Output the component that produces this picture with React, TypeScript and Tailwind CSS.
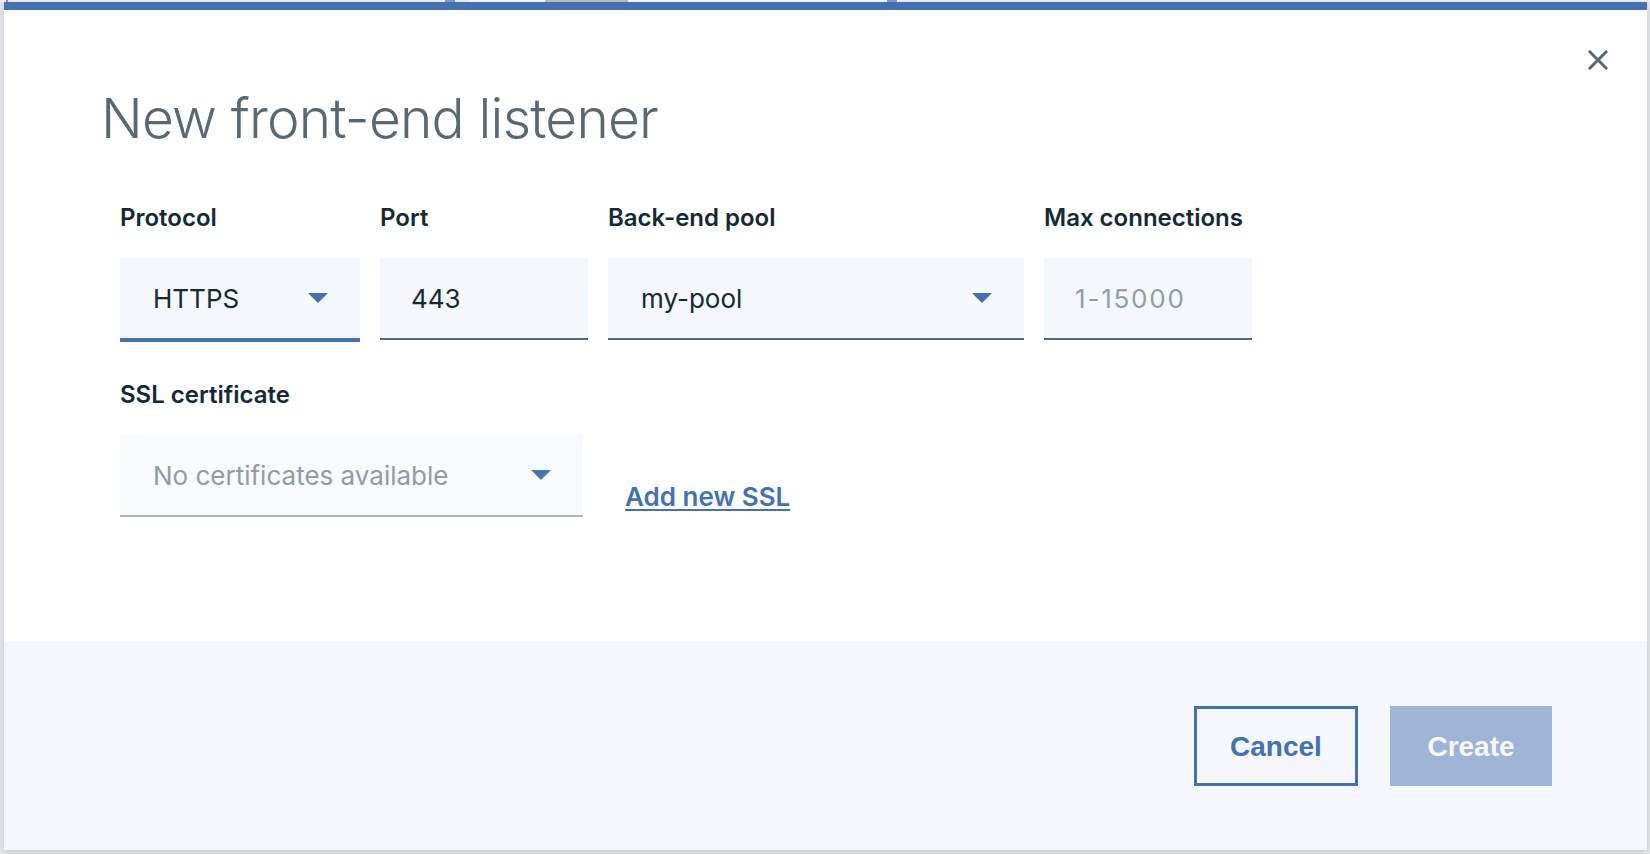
import React from 'react';

const labelCls = "block text-[24px] leading-[30px] font-semibold text-[#152935] font-['Inter',sans-serif]";
const fieldText = "text-[26px] font-['Inter',sans-serif]";

/** Small blue caret used in the select fields */
const Caret: React.FC<{ className?: string }> = ({ className = '' }) => (
  <svg className={className} width="20" height="10" viewBox="0 0 20 10">
    <path d="M0 0h20L10 10z" fill="currentColor" />
  </svg>
);

interface SelectProps {
  value: string;
  width: string;
  active?: boolean;
  disabled?: boolean;
}

const SelectField: React.FC<SelectProps> = ({ value, width, active, disabled }) => (
  <div
    className={[
      'h-[82px] flex items-center justify-between pl-[33px] pr-[32px] border-b-2',
      width,
      disabled ? 'bg-[#f8fafc] border-[#adb3b8]' : 'bg-[#f4f7fb] border-[#5a6872]',
      active ? 'border-[#4571b0] shadow-[0_2px_0_0_#4571b0]' : '',
    ].join(' ')}
  >
    <span className={[fieldText, disabled ? 'text-[#939ca4]' : 'text-[#152935]'].join(' ')}>{value}</span>
    <Caret className={disabled ? 'text-[#4a73b0]' : 'text-[#4571b0]'} />
  </div>
);

const InputField: React.FC<{ value?: string; placeholder?: string; width: string }> = ({ value, placeholder, width }) => (
  <div className={['h-[82px] flex items-center pl-[31px] bg-[#f4f7fb] border-b-2 border-[#5a6872]', width].join(' ')}>
    {value ? (
      <span className={[fieldText, 'text-[#152935]'].join(' ')}>{value}</span>
    ) : (
      <span className={[fieldText, 'text-[#949ea6] tracking-[1.8px]'].join(' ')}>{placeholder}</span>
    )}
  </div>
);

const Field: React.FC<{ label: string; children: React.ReactNode }> = ({ label, children }) => (
  <div className="flex flex-col gap-[25px]">
    <span className={labelCls}>{label}</span>
    {children}
  </div>
);

export default function App() {
  return (
    <div className="relative w-[1650px] h-[854px] overflow-hidden bg-[#e3e5e8]">
      {/* page remnants peeking above the modal */}
      <div className="relative h-[2px] overflow-hidden bg-[#eef0f2]">
        <div className="absolute left-[6px] top-0 w-[2px] h-[2px] bg-[#8a949c]" />
        <div className="absolute left-[470px] top-0 w-[420px] h-[2px] bg-[#f7f8fa]" />
        <div className="absolute left-[445px] top-0 w-[10px] h-[2px] bg-[#7f9ccc]" />
        <div className="absolute left-[545px] top-0 w-[83px] h-[2px] bg-[#b9bec3]" />
        <div className="absolute left-[887px] top-0 w-[10px] h-[2px] bg-[#7f9ccc]" />
      </div>

      {/* Modal */}
      <div className="absolute left-[4px] top-[2px] w-[1643px] h-[848px] flex flex-col bg-white border-t-[8px] border-[#4571b0] shadow-[0_2px_6px_rgba(0,0,0,0.12)]">
        <div className="relative flex-1 flex flex-col">
          <button className="absolute top-[40px] right-[39px] w-[20px] h-[20px] text-[#5a6872]">
            <svg width="20" height="20" viewBox="0 0 20 20">
              <path d="M2 2L18 18M18 2L2 18" stroke="currentColor" strokeWidth="3" strokeLinecap="square" />
            </svg>
          </button>

          <h1 className="mt-[80px] ml-[97px] text-[55px] leading-[57px] font-light tracking-[-0.8px] text-[#5a6872] font-['Inter',sans-serif]">
            New front-end listener
          </h1>

          <div className="mt-[56px] ml-[116px] flex flex-col">
            {/* Row 1 */}
            <div className="flex gap-[20px]">
              <Field label="Protocol">
                <SelectField value="HTTPS" width="w-[240px]" active />
              </Field>
              <Field label="Port">
                <InputField value="443" width="w-[208px]" />
              </Field>
              <Field label="Back-end pool">
                <SelectField value="my-pool" width="w-[416px]" />
              </Field>
              <Field label="Max connections">
                <InputField placeholder="1-15000" width="w-[208px]" />
              </Field>
            </div>

            {/* Row 2 */}
            <div className="mt-[40px] flex items-end gap-[42px]">
              <Field label="SSL certificate">
                <SelectField value="No certificates available" width="w-[463px]" disabled />
              </Field>
              <a
                href="#"
                className="mb-[3px] text-[26px] leading-[34px] font-semibold text-[#4571b0] underline decoration-2 underline-offset-[3px] font-['Inter',sans-serif]"
              >
                Add new SSL
              </a>
            </div>
          </div>
        </div>

        {/* Footer */}
        <div className="h-[209px] bg-[#f4f7fb] flex items-center justify-end gap-[32px] pr-[95px]">
          <button className="w-[164px] h-[80px] pt-[2px] border-[3px] border-[#4571b0] text-[#4571b0] text-[28px] font-bold font-['Liberation_Sans',Arial,sans-serif]">
            Cancel
          </button>
          <button className="w-[162px] h-[80px] pt-[2px] bg-[#9fb4d6] text-[#f6f8fc] text-[28px] font-bold font-['Liberation_Sans',Arial,sans-serif]">
            Create
          </button>
        </div>
      </div>
    </div>
  );
}
